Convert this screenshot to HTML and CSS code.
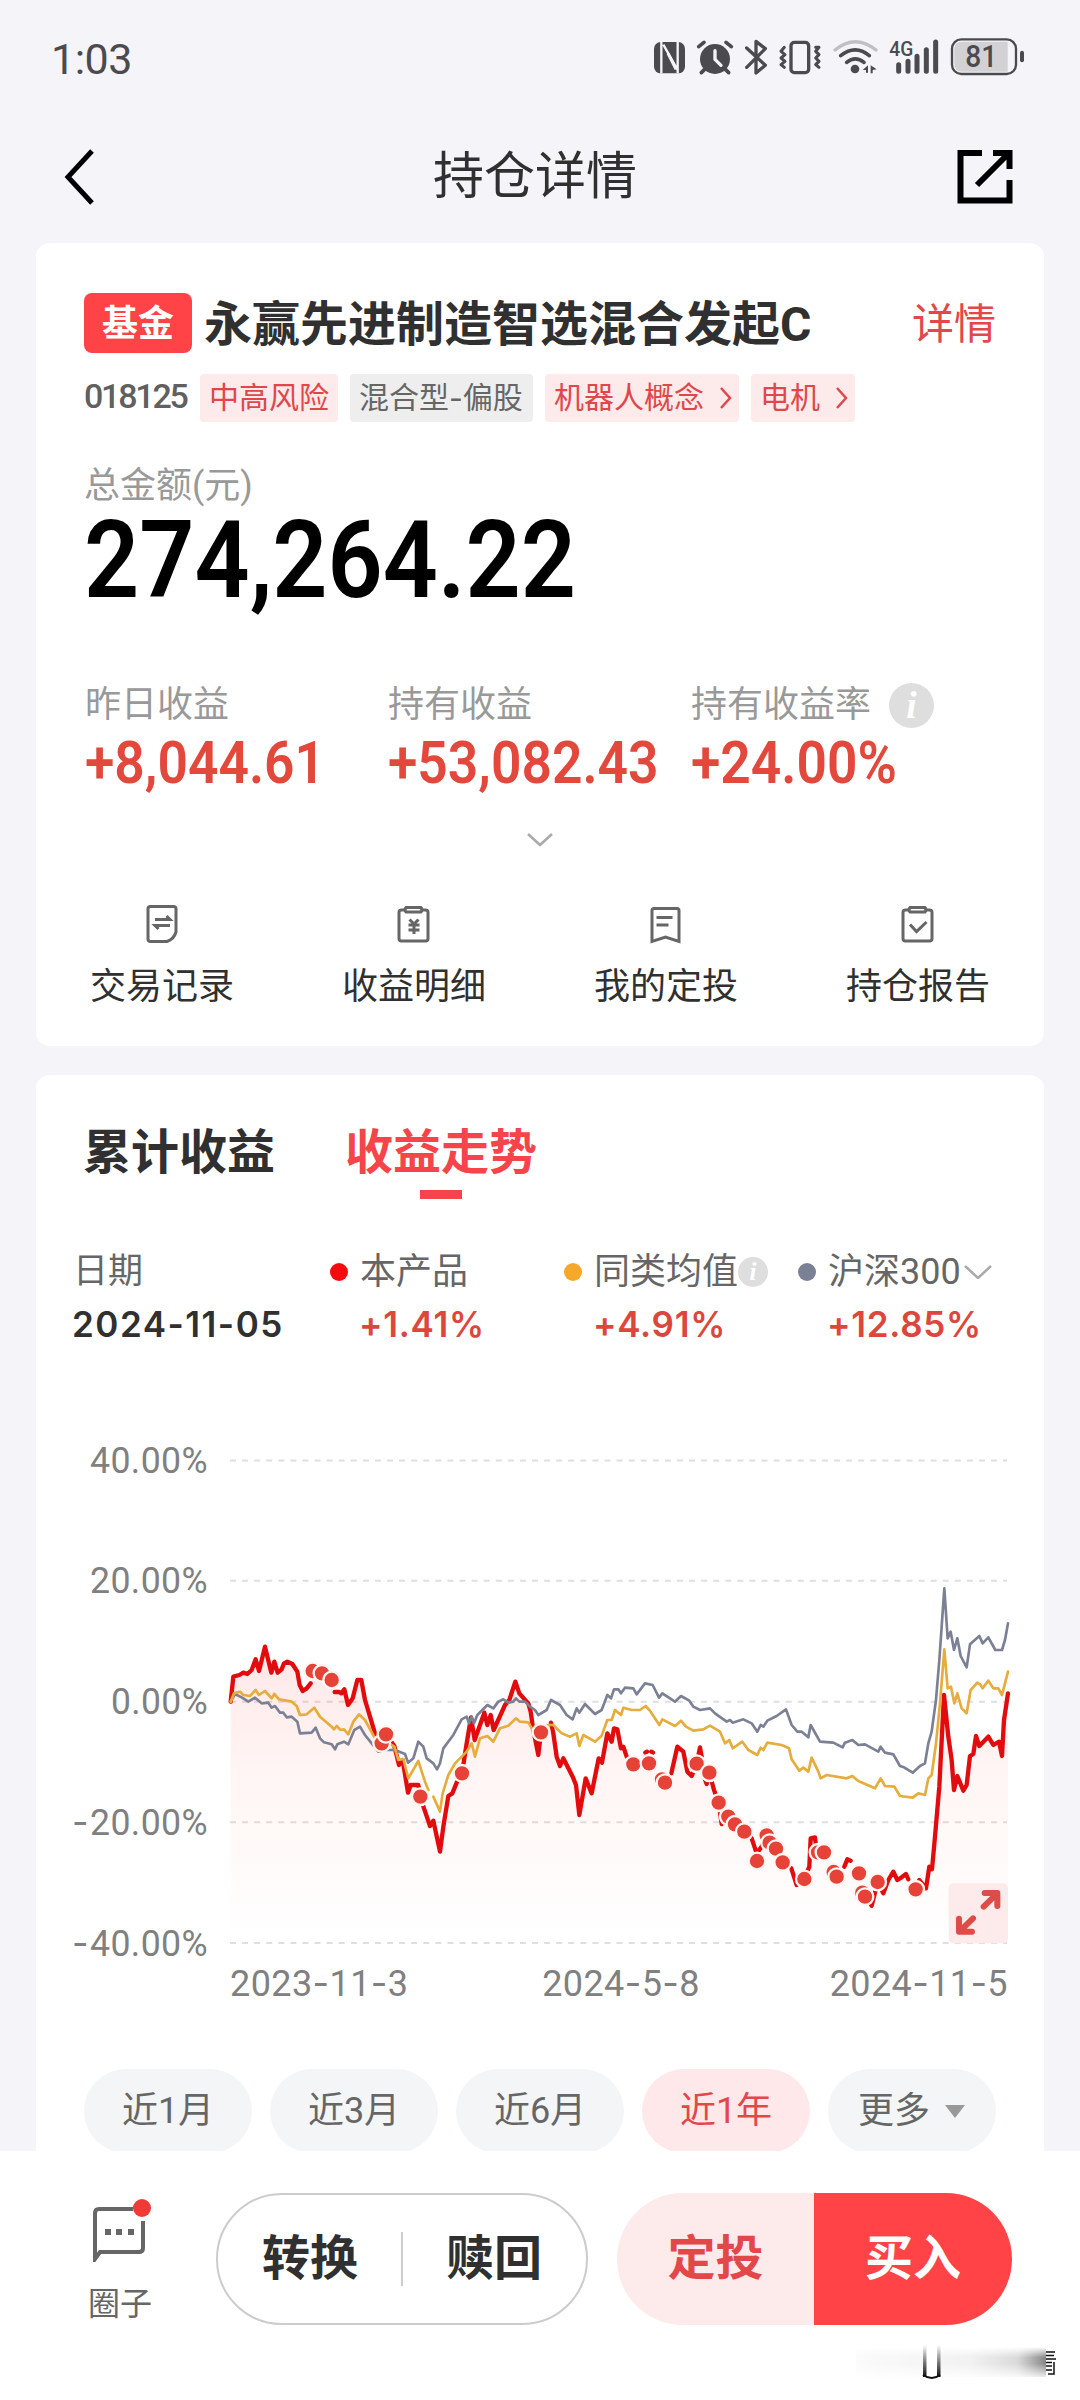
FILE: index.html
```html
<!DOCTYPE html>
<html lang="zh-CN">
<head>
<meta charset="utf-8">
<title>持仓详情</title>
<link rel="stylesheet" href="styles.css">
</head>
<body>
<div class="screen">
  <header class="status">
    <span class="time">1:03</span>
    <svg class="status-icons" viewBox="0 0 1200 240" width="400" height="80">
      <g fill="#4b4b4f">
        <rect x="42" y="66" width="93" height="94" rx="20"/>
        <path d="M64 66 L64 160 M70 74 L114 152 M113 66 L113 160" stroke="#f4f4f9" stroke-width="7" fill="none"/>
        <path d="M84 100 L108 148" stroke="#f4f4f9" stroke-width="9"/>
        <circle cx="225" cy="117" r="45"/>
        <path d="M176 80 L192 67 M274 80 L258 67 M196 146 L184 158 M254 146 L266 158" stroke="#4b4b4f" stroke-width="11" stroke-linecap="round"/>
        <path d="M225 92 V118 L243 136" stroke="#f4f4f9" stroke-width="10" fill="none" stroke-linecap="round"/>
      </g>
      <g fill="none" stroke="#4b4b4f" stroke-linecap="round" stroke-linejoin="round">
        <path d="M320 84 L376 136 L348 159 V64 L376 86 L320 142" stroke-width="10"/>
        <rect x="453" y="67" width="53" height="91" rx="10" stroke-width="10"/>
        <path d="M433 82 l-10 12 l12 10 l-12 10 l12 10 l-12 10 l10 8 M527 82 l10 0 l-10 12 l10 10 l-10 10 l10 10 l-10 10 l10 8" stroke-width="9"/>
        <path d="M585 90 Q646 40 708 90" stroke="#c0c0c4" stroke-width="10"/>
        <path d="M602 107 Q646 72 688 107 M620 127 Q646 106 672 127" stroke-width="11"/>
        <path d="M776 134 V154 M804 124 V154 M831 109 V154 M859 89 V154 M887 66 V154" stroke-width="15"/>
        <rect x="936" y="58" width="192" height="104" rx="28" stroke-width="7"/>
        <path d="M1146 98 V121" stroke-width="12"/>
      </g>
      <g fill="#4b4b4f">
        <circle cx="645" cy="147" r="13"/>
        <path d="M668 150 L684 136 V158 H678 V150Z M692 136 L710 148 L698 150 V160 H692Z"/>
        <path d="M966 65 H1103 V155 H966 Q943 155 943 132 V88 Q943 65 966 65Z" fill="#d2d2d4"/>
        <text x="748" y="108" class="net" textLength="72" lengthAdjust="spacingAndGlyphs">4G</text>
        <text x="976" y="142" class="batt" textLength="96" lengthAdjust="spacingAndGlyphs">81</text>
      </g>
    </svg>
  </header>

  <nav class="nav">
    <svg viewBox="0 0 30 56" width="30" height="56" fill="none" stroke="#000" stroke-width="5"><path d="M28 2 L4 28 L28 54"/></svg>
    <h1>持仓详情</h1>
    <svg viewBox="0 0 56 56" width="56" height="56" fill="none" stroke="#000" stroke-width="6"><path d="M25 4 H3.500 V51.500 H52.500 V31 M36 4 H52.500 V20 M52 4 L20 36"/></svg>
  </nav>

  <section class="card holding">
    <div class="fund">
      <span class="badge">基金</span>
      <h2>永赢先进制造智选混合发起C</h2>
      <a class="more">详情</a>
    </div>
    <div class="tags">
      <span class="code">018125</span>
      <span class="tag risk">中高风险</span>
      <span class="tag type">混合型<span class="dash">-</span>偏股</span>
      <span class="tag concept">机器人概念<svg viewBox="0 0 13 24" width="13" height="24"><path d="M2 2 L11 12 L2 22"/></svg></span>
      <span class="tag motor">电机<svg viewBox="0 0 13 24" width="13" height="24"><path d="M2 2 L11 12 L2 22"/></svg></span>
    </div>
    <div class="label total-label">总金额(元)</div>
    <div class="total"><span>274,264.22</span></div>
    <div class="stats">
      <div><div class="label">昨日收益</div><div class="gain"><span>+8,044.61</span></div></div>
      <div><div class="label">持有收益</div><div class="gain"><span>+53,082.43</span></div></div>
      <div><div class="label">持有收益率
        <svg viewBox="0 0 30 30" width="45" height="45"><circle cx="15" cy="15" r="15" fill="#dedede"/><text x="15" y="23" class="info">i</text></svg></div><div class="gain"><span>+24.00%</span></div></div>
    </div>
    <svg class="expand" viewBox="0 0 26 14" width="26" height="14"><path d="M1 1 L13 12 L25 1"/></svg>
    <div class="actions">
      <div><svg viewBox="0 0 40 40" width="40" height="40"><path d="M8.500 2.500 H31.500 Q34 2.500 34 5 V28 Q32 35 25 37.500 H8.500 Q6 37.500 6 35 V5 Q6 2.500 8.500 2.500Z"/><path d="M13 15.500 H28 L24.500 12 M28 21.500 H13 L16.500 25"/></svg>交易记录</div>
      <div><svg viewBox="0 0 40 40" width="40" height="40"><path d="M11 6 H7.500 Q5 6 5 8.500 V34.500 Q5 37 7.500 37 H31.500 Q34 37 34 34.500 V8.500 Q34 6 31.500 6 H28 M12 3.500 H27 Q29 5.500 27 8 H12 Q10 5.500 12 3.500Z"/><path d="M15.500 15.500 L20 20 L24.500 15.500 M20 20 V30 M14.500 21 H25.500 M14.500 26 H25.500"/></svg>收益明细</div>
      <div><svg viewBox="0 0 40 40" width="40" height="40"><path d="M8 4.500 H31 Q33 4.500 33 6.500 V37.500 L19.500 33 L6 37.500 V6.500 Q6 4.500 8 4.500Z"/><path d="M10.500 13.500 H26.500 M10.500 21 H22.500"/></svg>我的定投</div>
      <div><svg viewBox="0 0 40 40" width="40" height="40"><path d="M11 6 H7.500 Q5 6 5 8.500 V34.500 Q5 37 7.500 37 H31.500 Q34 37 34 34.500 V8.500 Q34 6 31.500 6 H28 M12 3.500 H27 Q29 5.500 27 8 H12 Q10 5.500 12 3.500Z"/><path d="M12 20.500 L18.500 27.500 L28.500 18"/></svg>持仓报告</div>
    </div>
  </section>

  <section class="card trend">
    <div class="tabs"><span>累计收益</span><span class="active">收益走势</span></div>
    <div class="legend">
      <div class="date"><div>日期</div><b>2024-11-05</b></div>
      <div><div><i class="dot red"></i>本产品</div><b>+1.41%</b></div>
      <div><div><i class="dot amber"></i>同类均值<svg viewBox="0 0 30 30" width="30" height="30"><circle cx="15" cy="15" r="15" fill="#dedede"/><text x="15" y="23" class="info">i</text></svg></div><b>+4.91%</b></div>
      <div><div><i class="dot slate"></i>沪深300<svg class="pick" viewBox="0 0 28 14" width="28" height="14"><path d="M1 1 L14 13 L27 1"/></svg></div><b>+12.85%</b></div>
    </div>
    <svg class="chart" viewBox="36 1440 1008 570" width="1008" height="570">
      <defs>
        <linearGradient id="area" gradientUnits="userSpaceOnUse" x1="0" y1="260" x2="0" y2="1149">
          <stop offset="0" stop-color="#ff4040" stop-opacity=".13"/><stop offset=".4" stop-color="#ff5040" stop-opacity=".06"/><stop offset="1" stop-color="#ff6040" stop-opacity="0"/>
        </linearGradient>
      </defs>
      <g class="grid"><path d="M230 1460.500H1007M230 1580.700H1007M230 1701.700H1007M230 1822.300H1007M230 1943H1007"/></g>
      <g class="axis">
        <text x="90" y="1473" textLength="118" lengthAdjust="spacingAndGlyphs">40.00%</text>
        <text x="90" y="1593" textLength="118" lengthAdjust="spacingAndGlyphs">20.00%</text>
        <text x="111" y="1714" textLength="97" lengthAdjust="spacingAndGlyphs">0.00%</text>
        <text x="72" y="1835"><tspan class="dash">-</tspan><tspan x="90" textLength="118" lengthAdjust="spacingAndGlyphs">20.00%</tspan></text>
        <text x="72" y="1956"><tspan class="dash">-</tspan><tspan x="90" textLength="118" lengthAdjust="spacingAndGlyphs">40.00%</tspan></text>
        <text x="230" y="1996">2023<tspan class="dash">-</tspan>11<tspan class="dash">-</tspan>3</text>
        <text x="621" y="1996" text-anchor="middle">2024<tspan class="dash">-</tspan>5<tspan class="dash">-</tspan>8</text>
        <text x="1008" y="1996" text-anchor="end">2024<tspan class="dash">-</tspan>11<tspan class="dash">-</tspan>5</text>
      </g>
      <g transform="translate(200 1560) scale(.33333)" fill="none" stroke-linejoin="round" stroke-linecap="round">
        <path fill="url(#area)" d="M92 1149V425L100 350L118 345L142 342L155 330L167 298L177 333L195 260L214 338L223 305L233 338L245 328L252 310L262 305L277 312L292 335L299 375L308 393L332 370L338 333L366 340L395 360L404 396L424 400L433 388L444 435L458 415L472 360L484 360L510 470L525 520L545 548L558 523L583 558L597 615L608 600L624 698L632 675L655 675L672 745L690 798L700 782L720 875L730 800L745 708L770 668L786 640L800 550L813 472L824 540L853 458L862 495L872 465L881 510L915 435L928 420L946 365L958 400L985 430L1000 510L1015 585L1023 517L1053 488L1070 590L1080 618L1090 595L1118 650L1128 675L1138 765L1157 655L1175 700L1196 595L1206 608L1222 520L1235 545L1245 505L1263 565L1280 590L1300 613L1347 580L1370 650L1395 668L1414 640L1432 560L1450 575L1462 635L1475 648L1490 611L1500 562L1520 672L1556 728L1565 792L1605 795L1632 813L1655 835L1670 903L1700 826L1748 907L1765 885L1790 975L1813 957L1828 920L1832 835L1845 832L1872 877L1910 950L1942 898L1977 940L1995 1010L2015 1040L2033 966L2050 1000L2080 935L2092 960L2118 942L2147 988L2158 960L2178 985L2188 920L2196 928L2205 830L2218 680L2232 405L2245 530L2262 690L2272 648L2290 692L2300 675L2310 588L2320 582L2328 528L2338 558L2365 530L2380 555L2397 545L2406 588L2412 480L2424 400V1149Z"/>
        <path stroke="#e20b0d" stroke-width="13" d="M92 425L100 350L118 345L130 338L142 342L155 330L167 298L177 333L195 260L214 338L223 305L233 338L245 328L252 310L262 305L277 312L292 335L299 375L308 393L320 385L332 370M404 396L418 396L424 400L433 388L444 435L458 415L472 360L484 360L495 420L510 470L525 520L545 548L558 523L583 558L597 615L608 600L624 698L632 675L655 675L661 710L672 745L690 798L700 782L720 875L730 800L745 708L757 700L770 668L786 640L800 550L813 472L824 540L853 458L862 495L872 465L881 510L915 435L928 420L946 365L958 400L985 430L992 455L1000 510L1015 585L1023 517M1053 488L1060 520L1070 590L1080 618L1090 595L1118 650L1128 675L1138 765L1157 655L1175 700L1196 595L1206 608L1222 520L1235 545L1242 505L1252 508L1263 565L1270 560L1280 590L1300 613M1336 578L1341 575M1354 575L1359 578M1414 640L1432 560L1450 575L1462 635L1475 648L1490 611L1500 562L1505 590M1512 650L1520 672L1528 638L1542 690L1556 728L1565 792L1585 770L1605 795L1632 813L1655 835L1670 880L1685 860L1700 826L1728 866L1748 907M1774 925L1790 975L1813 957L1828 920L1832 835L1845 832L1850 877M1933 920L1942 898L1952 902M1995 1010L2015 1037L2033 966L2050 1000L2065 960L2080 935L2092 960L2105 952L2118 942L2125 958M2158 960L2178 985L2188 920L2196 928L2205 830L2218 680L2232 405L2245 530L2255 600L2262 690L2272 648L2290 692L2300 675L2310 588L2320 582L2328 528L2338 558L2365 530L2380 555L2397 545L2406 588L2412 480L2424 400"/>
        <path stroke="#7b8094" stroke-width="8" d="M92 425L105 402L125 412L145 425L165 413L185 430L205 428L215 443L225 438L240 458L250 458L260 472L275 470L292 485L300 520L335 518L347 503L360 535L372 547L395 553L405 568L412 553L432 545L445 553L463 510L480 500L495 525L515 550L535 575L560 570L585 570L615 582L624 608L640 595L655 545L670 560L680 595L700 610L711 628L720 610L730 565L760 525L785 478L800 470L807 490L815 470L822 490L832 465L862 435L880 445L895 425L910 418L925 428L940 425L948 415L958 425L975 425L990 440L1005 450L1015 465L1040 450L1053 420L1080 435L1100 465L1118 478L1130 445L1138 458L1155 432L1185 462L1205 450L1222 405L1233 415L1242 388L1255 388L1263 400L1275 383L1300 385L1310 403L1335 370L1358 375L1377 413L1387 400L1425 425L1443 408L1468 422L1480 440L1500 450L1530 445L1545 460L1580 485L1590 480L1598 488L1630 478L1655 490L1672 515L1682 495L1690 500L1702 482L1730 468L1758 448L1775 495L1792 515L1805 515L1825 532L1832 495L1860 545L1900 548L1928 562L1935 548L1957 540L1975 555L1995 553L2035 575L2042 560L2055 578L2080 583L2100 618L2112 622L2138 638L2160 618L2175 610L2185 550L2195 515L2208 420L2218 300L2233 85L2243 235L2252 215L2262 270L2272 235L2282 288L2300 322L2310 253L2338 228L2348 250L2365 232L2386 270L2406 270L2415 240L2424 190"/>
        <path stroke="#e6ac3c" stroke-width="8" d="M92 425L102 400L120 395L130 405L150 408L167 390L177 405L195 393L215 415L223 402L237 418L275 425L290 438L300 465L320 463L343 443L360 470L395 500L402 508L410 498L422 510L432 508L445 523L460 485L477 463L495 480L525 535L560 545L583 560L595 600L610 597L625 655L655 603L675 665L685 690M700 710L720 755L728 700L745 645L765 610L800 575L815 550L825 590L840 535L862 528L880 545L900 505L925 497L948 475L960 485L985 487L998 510L1020 510L1045 495L1060 495L1085 520L1110 530L1130 520L1138 558L1150 525L1185 545L1205 527L1222 480L1235 480L1245 450L1263 465L1270 443L1295 450L1320 450L1337 438L1352 455L1378 495L1387 478L1425 498L1443 482L1458 500L1480 512L1510 508L1530 497L1560 515L1575 550L1588 540L1598 565L1627 545L1645 570L1672 585L1682 563L1690 570L1702 548L1745 555L1767 565L1775 598L1798 632L1810 623L1825 635L1835 593L1855 635L1862 655L1880 645L1940 655L1957 648L1975 663L2025 685L2042 655L2055 678L2083 680L2100 708L2138 713L2155 700L2175 705L2185 655L2195 645L2208 550L2220 430L2233 268L2243 385L2253 380L2263 430L2272 400L2285 445L2300 460L2312 390L2332 368L2340 373L2348 385L2365 362L2380 385L2395 385L2406 405L2415 370L2424 335"/>
        <g fill="#e64238" stroke="#fff6f4" stroke-width="7">
          <circle cx="338" cy="333" r="25"/><circle cx="366" cy="340" r="25"/><circle cx="395" cy="360" r="25"/><circle cx="545" cy="550" r="25"/><circle cx="558" cy="523" r="25"/><circle cx="661" cy="710" r="25"/><circle cx="786" cy="640" r="25"/><circle cx="1023" cy="517" r="25"/>
          <circle cx="1300" cy="613" r="25"/><circle cx="1347" cy="610" r="25"/><circle cx="1386" cy="658" r="25"/><circle cx="1395" cy="668" r="25"/><circle cx="1490" cy="611" r="25"/><circle cx="1528" cy="638" r="25"/><circle cx="1556" cy="728" r="25"/><circle cx="1585" cy="770" r="25"/><circle cx="1605" cy="793" r="25"/><circle cx="1633" cy="815" r="25"/><circle cx="1671" cy="903" r="25"/><circle cx="1700" cy="826" r="25"/><circle cx="1709" cy="848" r="25"/><circle cx="1728" cy="866" r="25"/><circle cx="1748" cy="907" r="25"/><circle cx="1813" cy="957" r="25"/><circle cx="1854" cy="877" r="25"/><circle cx="1872" cy="877" r="25"/><circle cx="1901" cy="936" r="25"/><circle cx="1910" cy="950" r="25"/><circle cx="1977" cy="940" r="25"/><circle cx="1987" cy="998" r="25"/><circle cx="1995" cy="1010" r="25"/><circle cx="2033" cy="966" r="25"/><circle cx="2147" cy="988" r="25"/>
        </g>
        <rect x="2246" y="970" width="178" height="180" rx="14" fill="#fdeaea"/>
        <path stroke="#df4b46" stroke-width="18" d="M2351 1040L2388 1004M2354 999H2392V1038M2319 1075L2282 1111M2277 1076V1115H2316"/>
      </g>
    </svg>
    <div class="ranges">
      <span>近1月</span><span>近3月</span><span>近6月</span><span class="on">近1年</span><span class="other">更多<i></i></span>
    </div>
  </section>

  <footer class="bar">
    <div class="circle">
      <svg viewBox="0 0 60 66" width="60" height="66"><path d="M42 13 H8 Q4 13 4 17 V63 L9 56 H48 Q52 56 52 52 V25" fill="none" stroke="#666" stroke-width="4"/><path d="M14 36h6M25 36h6M37 36h6" stroke="#666" stroke-width="6"/><circle cx="51" cy="12" r="9" fill="#ee3b38"/></svg>
      圈子
    </div>
    <div class="pill outline"><span>转换</span><span>赎回</span></div>
    <div class="pill solid"><span>定投</span><span>买入</span></div>
    <div class="smear">
      <svg viewBox="0 0 204 36" width="204" height="36">
        <defs>
          <linearGradient id="sx"><stop offset="0" stop-color="#777" stop-opacity=".03"/><stop offset=".6" stop-color="#777" stop-opacity=".1"/><stop offset=".85" stop-color="#555" stop-opacity=".22"/><stop offset="1" stop-color="#333" stop-opacity=".6"/></linearGradient>
          <linearGradient id="sy" x2="0" y2="1"><stop offset="0" stop-color="#111" stop-opacity="0"/><stop offset="1" stop-color="#111"/></linearGradient>
          <linearGradient id="fade" x2="0" y2="1"><stop offset="0" stop-color="#fff"/><stop offset=".35" stop-color="#fff" stop-opacity="0"/><stop offset=".55" stop-color="#fff" stop-opacity="0"/><stop offset="1" stop-color="#fff" stop-opacity=".85"/></linearGradient>
        </defs>
        <rect y="2" width="190" height="30" fill="url(#sx)"/><rect y="2" width="190" height="30" fill="url(#fade)"/>
        <rect x="70" y="0" width="12" height="32" fill="#fff"/>
        <rect x="67" y="0" width="3.500" height="32" fill="url(#sy)"/><rect x="81" y="0" width="3.500" height="32" fill="url(#sy)"/>
        <path d="M67 30Q76 36 84 30" fill="none" stroke="#111" stroke-width="2"/>
        <path d="M190 7H199M190 10.500H198M190 14H200M190 17.500H196M190 21H196M190 25H196M198 17V29H192" fill="none" stroke="#111" stroke-width="1.500"/>
      </svg>
    </div>
  </footer>
</div>
</body>
</html>
```
FILE: styles.css
```css
* { box-sizing: border-box; }
body { margin: 0; font-family: Roboto, "Noto Sans CJK SC", sans-serif; color: #303030; }
h1, h2 { margin: 0; }
svg { display: block; flex: none; }
.dash { font-family: Inter, sans-serif; }
.screen { width: 1080px; height: 2400px; background: #f4f4f9; display: flex; flex-direction: column; overflow: hidden; }

.status { height: 120px; padding: 20px 40px 0 51px; display: flex; justify-content: space-between; flex: none; }
.time { font-size: 43px; line-height: 78px; color: #4b4b4f; letter-spacing: -.5px; }
.net { font: 500 60px Roboto, sans-serif; }
.batt { font: 500 92px Roboto, sans-serif; }

.nav { height: 123px; padding: 29px 67px 38px 64px; display: flex; align-items: center; justify-content: space-between; flex: none; }
.nav h1 { font-size: 51px; font-weight: 400; line-height: 56px; padding-left: 19px; }

.card { margin: 0 36px; background: #fff; border-radius: 14px; display: flex; flex-direction: column; flex: none; }
.holding { height: 803px; padding: 50px 48px 0; }
.fund { display: flex; align-items: center; height: 60px; }
.badge { width: 108px; height: 60px; border-radius: 8px; background: #ff4346; color: #fff; font-size: 36px; font-weight: 700; line-height: 60px; padding-top: 1px; text-align: center; }
.fund h2 { font-size: 48px; font-weight: 700; line-height: 60px; padding-top: 3px; margin-left: 12px; white-space: nowrap; }
.more { margin-left: auto; font-size: 42px; line-height: 58px; padding-top: 3px; color: #e2474a; }

.tags { display: flex; gap: 12px; height: 48px; margin-top: 21px; font-size: 30px; line-height: 48px; }
.code { width: 104px; font-size: 34px; font-weight: 500; letter-spacing: -2.2px; line-height: 44px; color: #606060; }
.tag { border-radius: 4px; background: #fdeaea; color: #e0474a; display: flex; align-items: center; padding-left: 9px; white-space: nowrap; }
.tag svg { margin-left: 15px; fill: none; stroke: #e0474a; stroke-width: 2.5; }
.risk { width: 138px; }
.type { width: 183px; background: #eee; color: #666; }
.concept { width: 194px; }
.motor { width: 104px; }

.label { font-size: 36px; line-height: 40px; color: #999; display: flex; align-items: center; height: 40px; white-space: nowrap; position: relative; top: 1px; }
.label svg { margin-left: 18px; }
.info { font: italic 700 25px "Liberation Serif", serif; fill: #fff; text-anchor: middle; }
.total-label { margin-top: 43px; }
.total { height: 110px; line-height: 110px; font-size: 108px; font-weight: 600; color: #000; }
.total span, .gain span { display: inline-block; transform: scaleX(.895); transform-origin: 0 50%; }
.stats { margin-top: 69px; padding-left: 1px; display: grid; grid-template-columns: 303px 303px 1fr; }
.gain { margin-top: 9px; height: 60px; line-height: 60px; font-size: 59px; font-weight: 600; color: #e2483b; white-space: nowrap; }
.gain span { transform: scaleX(.905); }
.expand { margin: 40px auto 0; fill: none; stroke: #aaa; stroke-width: 2.5; }
.actions { margin: 57px -48px 0; display: grid; grid-template-columns: repeat(4, 1fr); font-size: 36px; line-height: 40px; }
.actions div { display: flex; flex-direction: column; align-items: center; gap: 23px; }
.actions svg { fill: none; stroke: #666; stroke-width: 3; }

.trend { margin-top: 29px; height: 1076px; border-radius: 14px 14px 0 0; overflow: hidden; }
.tabs { display: flex; gap: 70px; padding: 49px 48px 0 47px; font-size: 48px; font-weight: 700; line-height: 58px; height: 124px; }
.tabs .active { color: #f5444a; }
.tabs .active::after { content: ""; display: block; width: 42px; height: 9px; margin: 8px auto 0; background: #f5444a; }
.legend { margin-top: 53px; padding-left: 37px; display: grid; grid-template-columns: 257px 234px 234px 1fr; font-size: 36px; line-height: 40px; color: #666; }
.legend > div > div { display: flex; align-items: center; white-space: nowrap; height: 40px; }
.legend .date > div { font-size: 35px; }
.legend b { display: block; margin: 12px 0 0 29px; font-family: Inter, sans-serif; font-weight: 600; font-size: 35px; letter-spacing: .7px; color: #dc473d; }
.legend .date b { margin-left: -1px; letter-spacing: 1.5px; color: #303030; }
.dot { width: 18px; height: 18px; border-radius: 50%; margin-right: 12px; }
.red { background: #f30b0d; }
.amber { background: #f7a72a; }
.slate { background: #7b8094; }
.pick { margin-left: 3px; fill: none; stroke: #aaa; stroke-width: 2.5; }
.chart { margin-top: 96px; }
.grid { stroke: #dfdfdf; stroke-width: 2; stroke-dasharray: 6 6.08; }
.axis { font: 400 36px Roboto, sans-serif; fill: #808080; letter-spacing: .4px; }
.ranges { display: flex; gap: 18px; padding-left: 48px; margin-top: 59px; }
.ranges span { width: 168px; height: 84px; border-radius: 42px; background: #f3f5f7; font-size: 36px; line-height: 84px; text-align: center; color: #666; flex: none; }
.ranges .on { background: #ffe8ea; color: #e2474a; }
.ranges .other { display: flex; align-items: center; padding-left: 30px; }
.other i { border: 10px solid transparent; border-top: 13px solid #999; border-bottom: 0; margin-left: 15px; }

.bar { position: relative; height: 249px; background: #fff; flex: none; display: flex; padding: 42px 0 0 72px; }
.circle { width: 96px; display: flex; flex-direction: column; align-items: center; font-size: 32px; line-height: 36px; color: #666; padding-top: 3px; gap: 24px; }
.circle svg { margin-left: 1px; }
.pill { height: 132px; border-radius: 66px; display: flex; font-size: 48px; font-weight: 700; line-height: 132px; text-align: center; overflow: hidden; }
.outline { width: 372px; border: 2px solid #ccc; margin-left: 48px; line-height: 132px; align-items: center; }
.outline span { flex: 1; }
.outline span + span { position: relative; }
.outline span + span::before { content: ""; position: absolute; left: -1px; top: 39px; width: 2px; height: 54px; background: #ccc; }
.solid { width: 395px; margin-left: 29px; }
.solid span { width: 197px; background: #fdeaea; color: #e2474a; }
.solid span + span { width: 198px; background: #ff4346; color: #fff; }
.smear { position: absolute; left: 856px; top: 194px; }
```
